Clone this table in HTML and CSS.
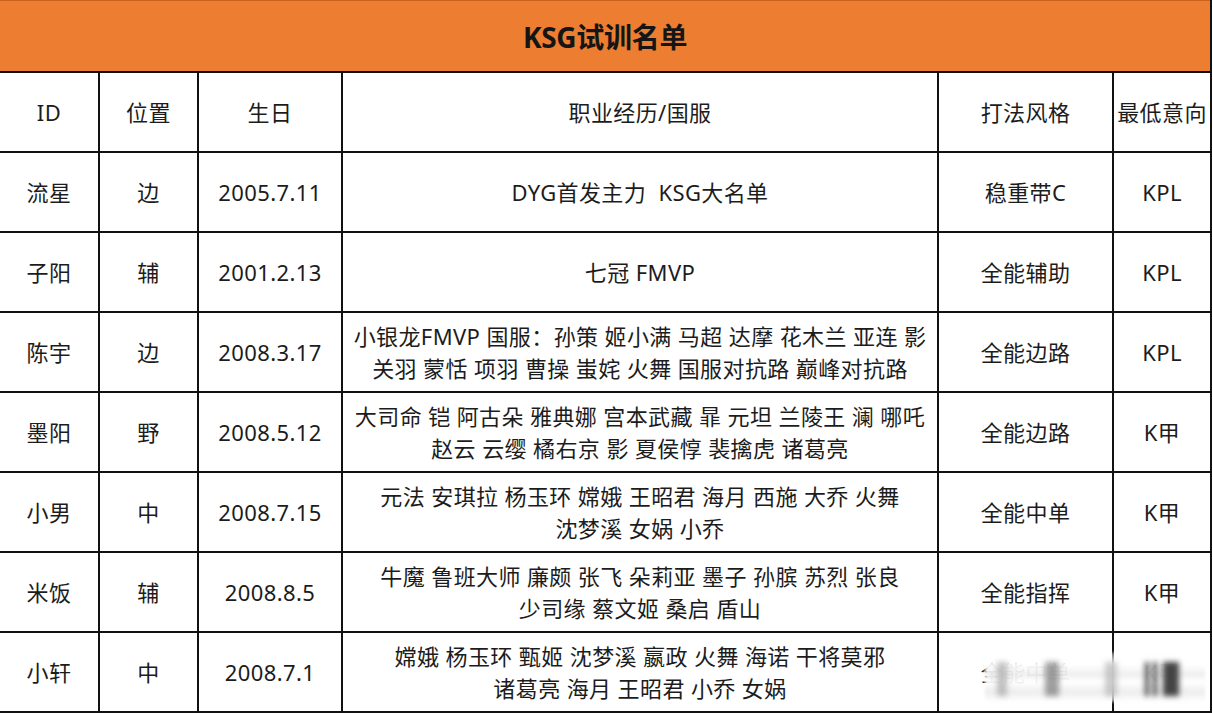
FILE: index.html
```html
<!DOCTYPE html>
<html lang="zh-CN">
<head>
<meta charset="utf-8">
<title>KSG试训名单</title>
<link rel="stylesheet" href="styles.css">
</head>
<body>
<div class="sheet">
  <div class="title">KSG试训名单</div>

  <div class="cell">ID</div>
  <div class="cell">位置</div>
  <div class="cell">生日</div>
  <div class="cell">职业经历/国服</div>
  <div class="cell">打法风格</div>
  <div class="cell">最低意向</div>

  <div class="cell">流星</div>
  <div class="cell">边</div>
  <div class="cell">2005.7.11</div>
  <div class="cell">DYG首发主力&nbsp; KSG大名单</div>
  <div class="cell">稳重带C</div>
  <div class="cell">KPL</div>

  <div class="cell">子阳</div>
  <div class="cell">辅</div>
  <div class="cell">2001.2.13</div>
  <div class="cell">七冠 FMVP</div>
  <div class="cell">全能辅助</div>
  <div class="cell">KPL</div>

  <div class="cell">陈宇</div>
  <div class="cell">边</div>
  <div class="cell">2008.3.17</div>
  <div class="cell">小银龙FMVP 国服：孙策 姬小满 马超 达摩 花木兰 亚连 影<br>关羽 蒙恬 项羽 曹操 蚩姹 火舞 国服对抗路 巅峰对抗路</div>
  <div class="cell">全能边路</div>
  <div class="cell">KPL</div>

  <div class="cell">墨阳</div>
  <div class="cell">野</div>
  <div class="cell">2008.5.12</div>
  <div class="cell">大司命 铠 阿古朵 雅典娜 宫本武藏 暃 元坦 兰陵王 澜 哪吒<br>赵云 云缨 橘右京 影 夏侯惇 裴擒虎 诸葛亮</div>
  <div class="cell">全能边路</div>
  <div class="cell">K甲</div>

  <div class="cell">小男</div>
  <div class="cell">中</div>
  <div class="cell">2008.7.15</div>
  <div class="cell">元法 安琪拉 杨玉环 嫦娥 王昭君 海月 西施 大乔 火舞<br>沈梦溪 女娲 小乔</div>
  <div class="cell">全能中单</div>
  <div class="cell">K甲</div>

  <div class="cell">米饭</div>
  <div class="cell">辅</div>
  <div class="cell">2008.8.5</div>
  <div class="cell">牛魔 鲁班大师 廉颇 张飞 朵莉亚 墨子 孙膑 苏烈 张良<br>少司缘 蔡文姬 桑启 盾山</div>
  <div class="cell">全能指挥</div>
  <div class="cell">K甲</div>

  <div class="cell">小轩</div>
  <div class="cell">中</div>
  <div class="cell">2008.7.1</div>
  <div class="cell">嫦娥 杨玉环 甄姬 沈梦溪 嬴政 火舞 海诺 干将莫邪<br>诸葛亮 海月 王昭君 小乔 女娲</div>
  <div class="cell">全能中单</div>
  <div class="cell">K甲</div>

  <div class="watermark" aria-hidden="true">
    <i class="bar b1"></i>
    <i class="bar b2"></i>
    <i class="bar b3"></i>
    <i class="bar b4"></i>
    <i class="bar b5"></i>
    <i class="bar b6"></i>
  </div>
</div>
</body>
</html>
```

FILE: styles.css
```css
html, body {
  margin: 0;
  padding: 0;
  background: #ffffff;
}

.sheet {
  position: relative;
  width: 1212px;
  height: 713px;
  display: grid;
  grid-template-columns: 98px 97px 142px 594px 173px 96px;
  grid-template-rows: 71px repeat(8, 78px);
  gap: 2px;
  padding: 0 2px 2px 0;
  box-sizing: border-box;
  background: #111111;
  font-family: "Noto Sans", "Noto Sans CJK SC", sans-serif;
  color: #1c1c1c;
}

.title {
  grid-column: 1 / -1;
  background: #ed7d31;
  border-top: 1px solid #c9621c;
  display: flex;
  align-items: center;
  justify-content: center;
  font-size: 28px;
  font-weight: 700;
  color: #151515;
  letter-spacing: -0.3px;
}

.cell {
  background: #ffffff;
  display: flex;
  align-items: center;
  justify-content: center;
  text-align: center;
  font-size: 22px;
  line-height: 32px;
  letter-spacing: 0.4px;
  white-space: nowrap;
}

.watermark {
  position: absolute;
  left: 985px;
  top: 652px;
  width: 220px;
  height: 50px;
  background: linear-gradient(to bottom,
    rgba(255,255,255,0.35) 0%,
    rgba(255,255,255,0.95) 25%,
    rgba(238,238,238,0.95) 45%,
    rgba(255,255,255,0.95) 60%,
    rgba(235,235,235,0.9) 80%,
    rgba(255,255,255,0.6) 100%);
  filter: blur(1.5px);
}

.bar {
  position: absolute;
  top: 10px;
  height: 34px;
  background: #444444;
  filter: blur(2.5px);
}

.b1 { left: 12px; width: 10px; background: #999999; opacity: 0.6; }
.b2 { left: 60px; width: 14px; background: #777777; opacity: 0.7; }
.b3 { left: 160px; width: 4px; }
.b4 { left: 168px; width: 4px; }
.b5 { left: 178px; width: 16px; }
.b6 { left: 120px; width: 12px; background: #aaaaaa; opacity: 0.6; }
```
